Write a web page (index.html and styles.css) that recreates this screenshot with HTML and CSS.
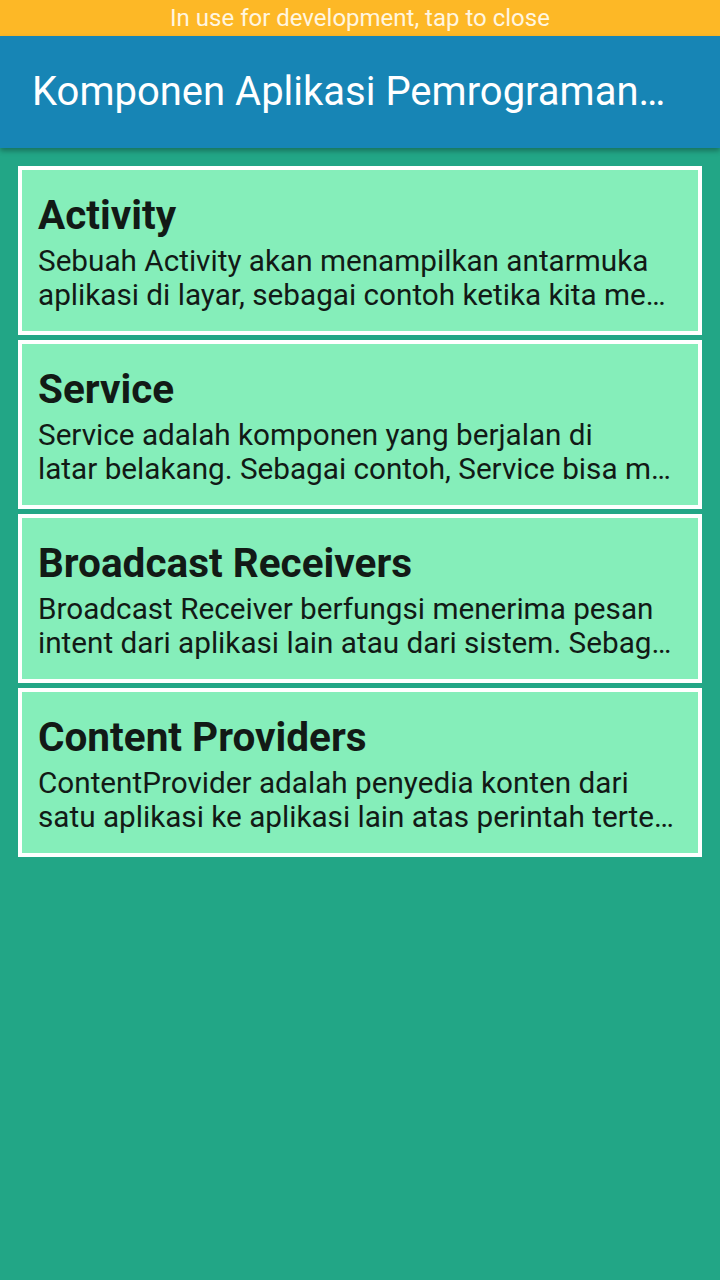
FILE: index.html
```html
<!DOCTYPE html>
<html lang="id">
<head>
<meta charset="utf-8">
<title>Komponen Aplikasi Pemrograman</title>
<link rel="stylesheet" href="styles.css">
</head>
<body>
<div class="screen">
  <div class="devbar">In use for development, tap to close</div>
  <header class="appbar">
    <h1 class="appbar-title">Komponen Aplikasi Pemrograman…</h1>
  </header>
  <main class="list">
    <section class="card">
      <h2 class="card-title">Activity</h2>
      <p class="card-desc"><span class="line">Sebuah Activity akan menampilkan antarmuka</span><span class="line">aplikasi di layar, sebagai contoh ketika kita me…</span></p>
    </section>
    <section class="card">
      <h2 class="card-title">Service</h2>
      <p class="card-desc"><span class="line">Service adalah komponen yang berjalan di</span><span class="line">latar belakang. Sebagai contoh, Service bisa m…</span></p>
    </section>
    <section class="card">
      <h2 class="card-title">Broadcast Receivers</h2>
      <p class="card-desc"><span class="line">Broadcast Receiver berfungsi menerima pesan</span><span class="line">intent dari aplikasi lain atau dari sistem. Sebag…</span></p>
    </section>
    <section class="card">
      <h2 class="card-title">Content Providers</h2>
      <p class="card-desc"><span class="line">ContentProvider adalah penyedia konten dari</span><span class="line">satu aplikasi ke aplikasi lain atas perintah terte…</span></p>
    </section>
  </main>
</div>
</body>
</html>
```
FILE: styles.css
```css
* { box-sizing: border-box; }
html, body {
  margin: 0;
  padding: 0;
  width: 720px;
  height: 1280px;
  overflow: hidden;
}
body {
  font-family: Roboto, "Noto Sans", sans-serif;
  background: #22a686;
}
.screen {
  width: 720px;
  height: 1280px;
  display: flex;
  flex-direction: column;
  background: #22a686;
}
.devbar {
  height: 36px;
  background: #fdb826;
  color: #fff6e0;
  font-size: 24px;
  line-height: 37px;
  text-align: center;
}
.appbar {
  height: 112px;
  background: #1785b5;
  display: flex;
  align-items: center;
  padding: 0 32px;
  box-shadow: 0 3px 5px rgba(0, 0, 0, 0.3);
  position: relative;
  z-index: 1;
}
.appbar-title {
  margin: 0;
  color: #ffffff;
  font-weight: 400;
  font-size: 40px;
  line-height: 48px;
  white-space: nowrap;
}
.list {
  padding: 18px 18px 0;
  display: flex;
  flex-direction: column;
  gap: 5px;
}
.card {
  border: 4px solid #ffffff;
  background: #85eeba;
  padding: 21px 16px 17px;
  height: 169px;
}
.card-title {
  margin: 0;
  font-size: 40.5px;
  font-weight: 700;
  line-height: 48px;
  color: #121a16;
}
.card-desc {
  margin: 5px 0 0;
  font-size: 29.7px;
  line-height: 34px;
  color: #121a16;
}
.line {
  display: block;
  white-space: nowrap;
}
```
